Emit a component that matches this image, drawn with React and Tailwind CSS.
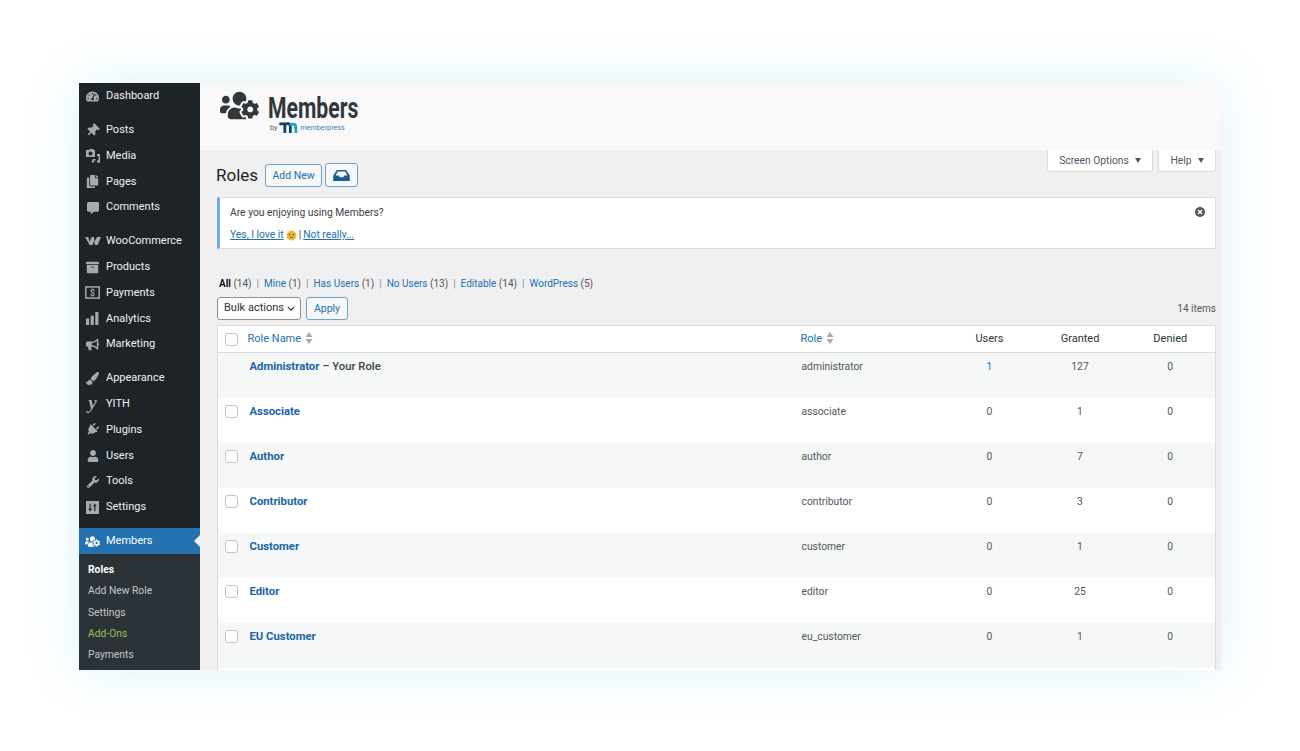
import React from "react";
import {
  FaTachometerAlt, FaThumbtack, FaCopy, FaCommentAlt, FaArchive,
  FaBullhorn, FaPaintBrush, FaPlug, FaUser, FaWrench, FaUsersCog,
} from "react-icons/fa";

const Woo = () => (
  <svg viewBox="0 0 24 14" className="w-[16px] h-[10px]" fill="currentColor">
    <path d="M0 1h5l1.500 7L10 1h3.500l1 7L18 1h6l-5 12h-4l-1.500-6L11 13H7z" />
  </svg>
);
const Media = () => (
  <svg viewBox="0 0 14 14" className="w-[14px] h-[14px]" fill="currentColor">
    <path d="M0 1h3l1-1h3l1 1h1v7H0zM4.500 2.500a2 2 0 100 4 2 2 0 000-4z" fillRule="evenodd" />
    <path d="M11 5h3v7.500a1.500 1.500 0 11-1.500-1.500V7H11zM6.500 10h3v1.500h-1.500v1a1.200 1.200 0 11-1.500-1.100z" />
  </svg>
);
const Money = () => (
  <svg viewBox="0 0 16 14" className="w-[15px] h-[13px]" fill="none" stroke="currentColor">
    <rect x="0.8" y="1" width="14.4" height="12" strokeWidth="1.6" />
    <text x="8" y="10.5" textAnchor="middle" fontSize="9" fontWeight="700" fill="currentColor" stroke="none">$</text>
  </svg>
);
const Bars = () => (
  <svg viewBox="0 0 14 14" className="w-[13px] h-[13px]" fill="currentColor">
    <rect x="0" y="7" width="3.4" height="7" />
    <rect x="5" y="4" width="3.4" height="10" />
    <rect x="10" y="0" width="3.4" height="14" />
  </svg>
);
const Yith = () => (
  <span className="text-[19px] leading-none font-bold italic font-['Liberation_Serif',serif] -mt-[4px]">y</span>
);
const Sliders = () => (
  <svg viewBox="0 0 14 14" className="w-[13px] h-[13px]">
    <rect width="14" height="14" fill="currentColor" />
    <path d="M4.500 3v8M9.500 3v8M2.800 9h3.400M7.800 5h3.400" stroke="#1d2327" strokeWidth="1.3" />
  </svg>
);

const menuGroups = [
  [{ label: "Dashboard", icon: <FaTachometerAlt size={13} /> }],
  [
    { label: "Posts", icon: <FaThumbtack size={13} className="rotate-45" /> },
    { label: "Media", icon: <Media /> },
    { label: "Pages", icon: <FaCopy size={13} /> },
    { label: "Comments", icon: <FaCommentAlt size={12} /> },
  ],
  [
    { label: "WooCommerce", icon: <Woo /> },
    { label: "Products", icon: <FaArchive size={13} /> },
    { label: "Payments", icon: <Money /> },
    { label: "Analytics", icon: <Bars /> },
    { label: "Marketing", icon: <FaBullhorn size={13} /> },
  ],
  [
    { label: "Appearance", icon: <FaPaintBrush size={13} /> },
    { label: "YITH", icon: <Yith /> },
    { label: "Plugins", icon: <FaPlug size={13} className="rotate-45" /> },
    { label: "Users", icon: <FaUser size={12} /> },
    { label: "Tools", icon: <FaWrench size={12} /> },
    { label: "Settings", icon: <Sliders /> },
  ],
];

const subMenu = [
  { label: "Roles", cls: "text-white font-bold" },
  { label: "Add New Role", cls: "text-[#c3c4c7]" },
  { label: "Settings", cls: "text-[#c3c4c7]" },
  { label: "Add-Ons", cls: "text-[#8cc152]" },
  { label: "Payments", cls: "text-[#c3c4c7]" },
];

const filters = [
  ["Mine", "(1)"],
  ["Has Users", "(1)"],
  ["No Users", "(13)"],
  ["Editable", "(14)"],
  ["WordPress", "(5)"],
];

const roles = [
  { name: "Administrator", slug: "administrator", users: "1", granted: "127", denied: "0", own: true },
  { name: "Associate", slug: "associate", users: "0", granted: "1", denied: "0" },
  { name: "Author", slug: "author", users: "0", granted: "7", denied: "0" },
  { name: "Contributor", slug: "contributor", users: "0", granted: "3", denied: "0" },
  { name: "Customer", slug: "customer", users: "0", granted: "1", denied: "0" },
  { name: "Editor", slug: "editor", users: "0", granted: "25", denied: "0" },
  { name: "EU Customer", slug: "eu_customer", users: "0", granted: "1", denied: "0" },
];

const Checkbox = () => (
  <span className="block w-[13px] h-[13px] bg-white border border-[#c3c4c7] rounded-[3px]" />
);

const SortArrows = () => (
  <svg viewBox="0 0 8 12" className="w-[8px] h-[12px] inline-block ml-[4px] align-[-2px]" fill="#a7aaad">
    <path d="M4 0l3.500 5H.5zM4 12L.5 7h7z" />
  </svg>
);

const Sidebar = () => (
  <aside className="w-[121px] shrink-0 h-full bg-[#1d2327] text-[#f0f0f1] text-[11px] flex flex-col">
    {menuGroups.map((group, i) => (
      <div key={i} className={i === 0 ? "mt-[0.5px]" : "mt-2"}>
        {group.map((item) => (
          <div key={item.label} className="h-[25.8px] flex items-center">
            <span className="w-[27px] shrink-0 flex justify-center text-[#a7aaad]">{item.icon}</span>
            <span>{item.label}</span>
          </div>
        ))}
      </div>
    ))}
    <div className="relative mt-2 h-[26px] shrink-0 flex items-center bg-[#2271b1] text-white">
      <span className="w-[27px] shrink-0 flex justify-center"><FaUsersCog size={15} /></span>
      <span>Members</span>
      <span className="absolute right-0 top-[7px] border-y-[6px] border-r-[6px] border-y-transparent border-r-[#f0f0f1]" />
    </div>
    <div className="flex-1 bg-[#2c3338] pt-[5px] text-[10.3px]">
      {subMenu.map((s) => (
        <div key={s.label} className={`h-[21.2px] flex items-center pl-[9px] ${s.cls}`}>{s.label}</div>
      ))}
    </div>
  </aside>
);

const Logo = () => (
  <div className="flex items-start gap-[9px] pl-[20px] pt-[7px]">
    <FaUsersCog size={39} className="text-[#32373c] -mt-[4px]" />
    <div className="flex flex-col items-start">
      <div className="h-[31px] w-[90px] pt-[5px]">
        <div className="origin-top-left scale-x-[0.73] w-max text-[29px] leading-[26px] font-bold text-[#32373c]">Members</div>
      </div>
      <div className="flex items-center gap-[2px] mt-[1px] pl-[2px] text-[7.2px] leading-[11px] text-[#3f7fb5]">
        <span className="text-[#50575e]">by</span>
        <svg viewBox="0 0 20 12" className="w-[19px] h-[11px]" fill="none" strokeWidth="3">
          <path d="M0 2h6v10" stroke="#0d3f73" />
          <path d="M6 3c2-2 6-2 6 2v7" stroke="#0d3f73" />
          <path d="M12 4c1-2 6-3 6 2v6" stroke="#13a8bd" />
        </svg>
        <span>memberpress</span>
      </div>
    </div>
  </div>
);

const Tab = ({ label, className }) => (
  <div className={`h-[22px] bg-white border border-t-0 border-[#dcdcde] rounded-b-[3px] flex items-center justify-center gap-[6px] text-[10.3px] text-[#50575e] ${className}`}>
    {label}
    <span className="border-x-[3.5px] border-t-[5px] border-x-transparent border-t-[#50575e]" />
  </div>
);

const OutlineButton = ({ children, className }) => (
  <button className={`border border-[#6ea3cf] rounded-[3px] bg-[#f6f7f7] text-[#2271b1] text-[10.5px] flex items-center justify-center ${className}`}>
    {children}
  </button>
);

const Notice = () => (
  <div className="mt-[10px] h-[52px] bg-white border border-[#dcdcde] border-l-[3px] border-l-[#72aee6] pl-[10px] pr-[10px] relative text-[10.3px] text-[#3c434a]">
    <div className="pt-[8px] leading-[14px]">Are you enjoying using Members?</div>
    <div className="mt-[8px] leading-[14px] flex items-center gap-[2px]">
      <a className="text-[#2271b1] underline">Yes, I love it</a>
      <svg viewBox="0 0 12 12" className="w-[11px] h-[11px]">
        <circle cx="6" cy="6" r="5.500" fill="#f5b942" />
        <circle cx="4" cy="5" r="0.900" fill="#6b4a12" />
        <circle cx="8" cy="5" r="0.900" fill="#6b4a12" />
        <path d="M4 8h4" stroke="#6b4a12" strokeWidth="0.9" />
      </svg>
      <span>|</span>
      <a className="text-[#2271b1] underline">Not really...</a>
    </div>
    <svg viewBox="0 0 10 10" className="w-[10px] h-[10px] absolute right-[10px] top-[9px]">
      <circle cx="5" cy="5" r="5" fill="#50575e" />
      <path d="M3 3l4 4M7 3l-4 4" stroke="#fff" strokeWidth="1.400" />
    </svg>
  </div>
);

const RolesTable = () => (
  <table className="mt-[5px] w-full table-fixed border-collapse bg-white border border-[#dcdcde] text-[10.3px] text-[#50575e]">
    <colgroup>
      <col className="w-[25px]" />
      <col className="w-[551px]" />
      <col className="w-[151px]" />
      <col className="w-[90px]" />
      <col className="w-[91px]" />
      <col />
    </colgroup>
    <thead>
      <tr className="h-[27px] border-b border-[#dcdcde] text-[#2c3338] text-[11px] font-normal">
        <th className="pl-[7px] font-normal"><Checkbox /></th>
        <th className="pl-[5px] text-left font-normal text-[#2271b1]">Role Name<SortArrows /></th>
        <th className="pl-[7px] text-left font-normal text-[#2271b1]">Role<SortArrows /></th>
        <th className="font-normal">Users</th>
        <th className="font-normal">Granted</th>
        <th className="font-normal">Denied</th>
      </tr>
    </thead>
    <tbody>
      {roles.map((r, i) => (
        <tr key={r.slug} className={`h-[45px] align-top ${i % 2 === 0 ? "bg-[#f6f7f7]" : "bg-white"}`}>
          <td className="pl-[7px] pt-[7px]">{!r.own && <Checkbox />}</td>
          <td className="pl-[7px] pt-[7px] text-[11.3px] leading-[14px]">
            <a className="font-bold text-[#1a64a8]">{r.name}</a>
            {r.own && <span className="font-medium text-[#3c434a]"> – Your Role</span>}
          </td>
          <td className="pl-[8px] pt-[7px] leading-[14px]">{r.slug}</td>
          <td className={`pt-[7px] leading-[14px] text-center ${r.own ? "text-[#2271b1]" : ""}`}>{r.users}</td>
          <td className="pt-[7px] leading-[14px] text-center">{r.granted}</td>
          <td className="pt-[7px] leading-[14px] text-center">{r.denied}</td>
        </tr>
      ))}
      <tr className="h-[10px] bg-white"><td colSpan={6} /></tr>
    </tbody>
  </table>
);

export default function App() {
  return (
    <div className="w-[1300px] h-[751px] bg-white overflow-hidden pl-[79px] pt-[83px] font-['Roboto','Liberation_Sans',sans-serif]">
      <div className="w-[1142px] h-[587px] flex overflow-hidden shadow-[0_0_50px_rgba(140,215,240,0.3)]">
        <Sidebar />
        <div className="flex-1 min-w-0 flex flex-col bg-[#f0f0f1]">
          <header className="h-[67px] shrink-0 bg-[#f9f9f9]"><Logo /></header>
          <main className="flex-1 min-h-0 overflow-hidden pl-[17px] pr-[5px]">
            <div className="flex justify-between items-start">
              <div className="flex items-center pt-[13px]">
                <h1 className="text-[17px] leading-[23px] text-[#1d2327] -ml-[1px]">Roles</h1>
                <OutlineButton className="ml-[7px] mt-[1px] w-[57px] h-[23px]">Add New</OutlineButton>
                <OutlineButton className="ml-[3px] w-[33px] h-[24px]">
                  <svg viewBox="0 0 18 12" className="w-[17px] h-[11px]" fill="#135e96">
                    <path d="M4 0h10l4 6v6H0V6zM5 1.500L2.500 6H6l1 2h4l1-2h3.500L13 1.500z" fillRule="evenodd" />
                  </svg>
                </OutlineButton>
              </div>
              <div className="flex gap-[5px]">
                <Tab label="Screen Options" className="w-[106px]" />
                <Tab label="Help" className="w-[58px]" />
              </div>
            </div>
            <Notice />
            <div className="mt-[27px] h-[14px] pl-[2px] flex items-center text-[10px] text-[#50575e]">
              <span className="font-semibold text-black">All</span>
              <span className="ml-[2.5px]">(14)</span>
              {filters.map(([name, count]) => (
                <span key={name} className="flex">
                  <span className="mx-[5px] text-[#8c8f94]">|</span>
                  <a className="text-[#2271b1]">{name}</a>
                  <span className="ml-[2.5px]">{count}</span>
                </span>
              ))}
            </div>
            <div className="mt-[7px] flex items-center">
              <div className="w-[84px] h-[23px] bg-white border border-[#8c8f94] rounded-[3px] flex items-center justify-between pl-[6px] pr-[5px] text-[11px] text-[#2c3338]">
                Bulk actions
                <svg viewBox="0 0 10 6" className="w-[8px] h-[5px]" fill="none" stroke="#2c3338" strokeWidth="1.500"><path d="M1 1l4 4 4-4" /></svg>
              </div>
              <OutlineButton className="ml-[5px] w-[42px] h-[23px]">Apply</OutlineButton>
              <span className="ml-auto text-[10px] text-[#50575e]">14 items</span>
            </div>
            <RolesTable />
          </main>
        </div>
      </div>
    </div>
  );
}
